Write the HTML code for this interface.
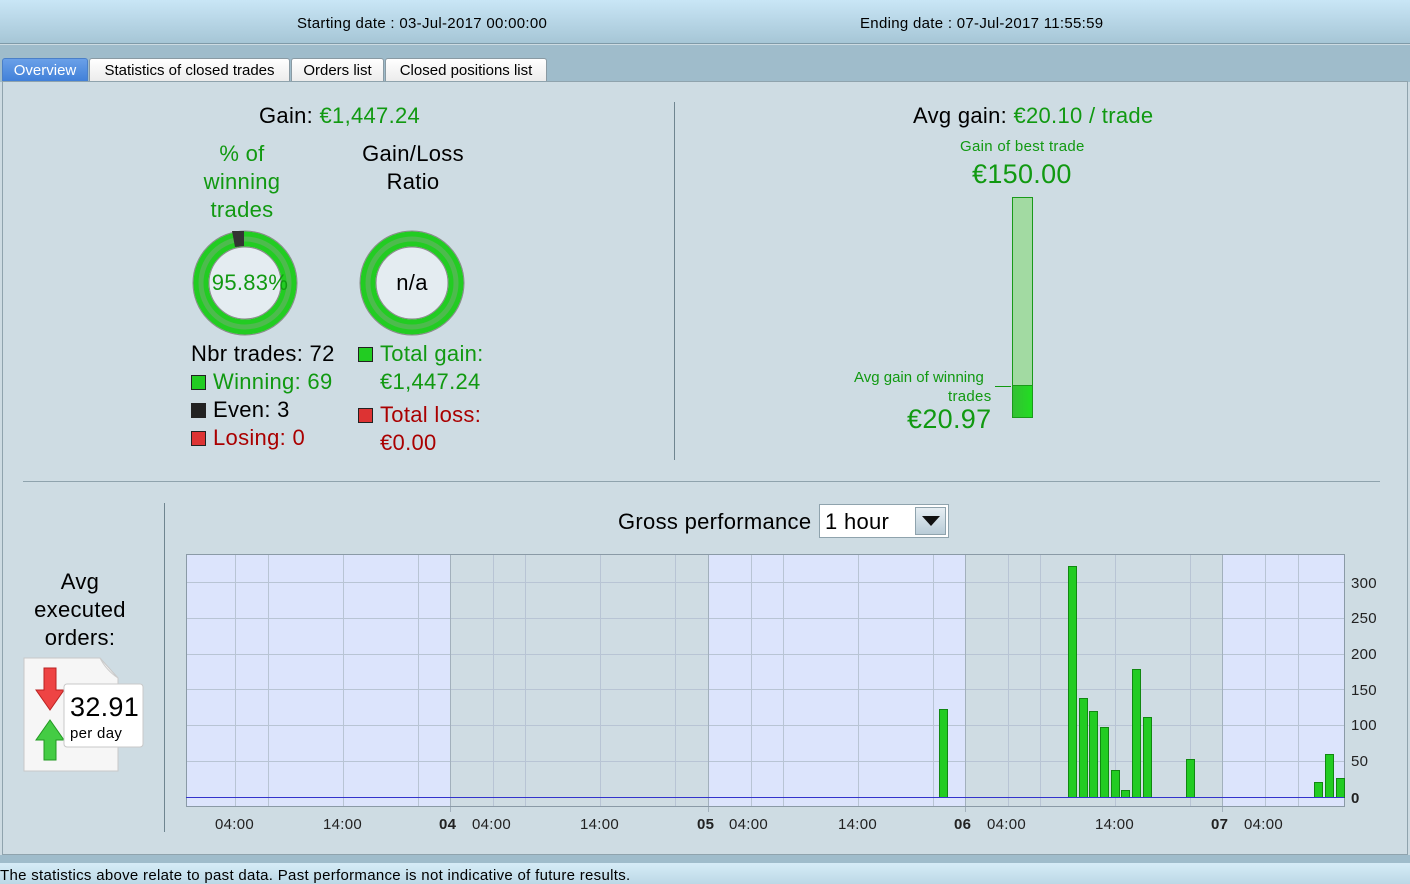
<!DOCTYPE html>
<html><head><meta charset="utf-8"><style>
*{margin:0;padding:0;box-sizing:border-box}
body{width:1410px;height:884px;overflow:hidden;background:#cddbe2;font-family:"Liberation Sans",Arial,sans-serif;position:relative;color:#000;letter-spacing:0.3px}
.a{position:absolute;white-space:nowrap}
.g{color:#119911}.r{color:#aa0000}
.sq{display:inline-block;width:15px;height:15px;border:1px solid #222;vertical-align:-1px;margin-right:7px}
.tab{position:absolute;top:58px;height:24px;background:linear-gradient(#fff,#ebebeb);border:1px solid #8a9aa3;border-bottom:none;border-radius:3px 3px 0 0;font-size:15px;line-height:23px;text-align:center;letter-spacing:0}
</style></head><body>
<div class="a" style="left:0;top:0;width:1410px;height:44px;background:linear-gradient(#c9e6f6,#a6c6d6);border-bottom:1px solid #7f9aa8"></div>
<div class="a" style="left:297px;top:15px;font-size:15px">Starting date : 03-Jul-2017 00:00:00</div>
<div class="a" style="left:860px;top:15px;font-size:15px">Ending date : 07-Jul-2017 11:55:59</div>
<div class="a" style="left:0;top:45px;width:1410px;height:37px;background:#9fbccb"></div>
<div class="tab" style="left:2px;width:86px;background:linear-gradient(#6aa0e8,#3f7fd8);color:#fff;border-color:#4a7fc8">Overview</div>
<div class="tab" style="left:89px;width:201px">Statistics of closed trades</div>
<div class="tab" style="left:291px;width:93px">Orders list</div>
<div class="tab" style="left:385px;width:162px">Closed positions list</div>
<div class="a" style="left:2px;top:81px;width:1406px;height:774px;background:#cedce3;border:1px solid #8fa3ad"></div>
<div class="a" style="left:0;top:855px;width:1410px;height:8px;background:#9fbccb"></div>
<div class="a" style="left:0;top:863px;width:1410px;height:21px;background:linear-gradient(#d6ecf7,#bcd8e6)"></div>
<div class="a" style="left:0;top:867px;font-size:15px">The statistics above relate to past data. Past performance is not indicative of future results.</div>

<div class="a" style="left:259px;top:103px;font-size:22px">Gain: <span class="g">€1,447.24</span></div>
<div class="a g" style="left:194px;top:140px;width:96px;text-align:center;font-size:22px;line-height:28px;white-space:normal">% of winning trades</div>
<div class="a" style="left:348px;top:140px;width:130px;text-align:center;font-size:22px;line-height:28px;white-space:normal">Gain/Loss Ratio</div>
<svg class="a" style="left:190px;top:228px" width="110" height="110"><circle cx="55" cy="55" r="52" fill="none" stroke="#888" stroke-width="1"/><circle cx="55" cy="55" r="44" fill="none" stroke="#22cc22" stroke-width="15"/><circle cx="55" cy="55" r="44" fill="none" stroke="#4dbb4d" stroke-width="5"/><path d="M42 3 L54 3 L54 18 L45 19Z" fill="#333"/><circle cx="55" cy="55" r="36" fill="#e4ecf1" stroke="#888"/><text x="60" y="62" text-anchor="middle" font-size="22" fill="#119911" font-family="Liberation Sans">95.83%</text></svg>
<svg class="a" style="left:357px;top:228px" width="110" height="110"><circle cx="55" cy="55" r="52" fill="none" stroke="#888" stroke-width="1"/><circle cx="55" cy="55" r="44" fill="none" stroke="#22cc22" stroke-width="15"/><circle cx="55" cy="55" r="44" fill="none" stroke="#4dbb4d" stroke-width="5"/><circle cx="55" cy="55" r="36" fill="#e4ecf1" stroke="#888"/><text x="55" y="62" text-anchor="middle" font-size="22" fill="#000" font-family="Liberation Sans">n/a</text></svg>
<div class="a" style="left:191px;top:341px;font-size:22px">Nbr trades: 72</div>
<div class="a g" style="left:191px;top:369px;font-size:22px"><span class="sq" style="background:#2c2"></span>Winning: 69</div>
<div class="a" style="left:191px;top:397px;font-size:22px"><span class="sq" style="background:#222"></span>Even: 3</div>
<div class="a r" style="left:191px;top:425px;font-size:22px"><span class="sq" style="background:#d33"></span>Losing: 0</div>
<div class="a g" style="left:358px;top:341px;font-size:22px"><span class="sq" style="background:#2c2"></span>Total gain:</div>
<div class="a g" style="left:380px;top:369px;font-size:22px">€1,447.24</div>
<div class="a r" style="left:358px;top:402px;font-size:22px"><span class="sq" style="background:#d33"></span>Total loss:</div>
<div class="a r" style="left:380px;top:430px;font-size:22px">€0.00</div>
<div class="a" style="left:674px;top:102px;width:1px;height:358px;background:#6f8590"></div>

<div class="a" style="left:913px;top:103px;font-size:22px">Avg gain: <span class="g">€20.10 / trade</span></div>
<div class="a g" style="left:960px;top:138px;font-size:15px">Gain of best trade</div>
<div class="a g" style="left:972px;top:159px;font-size:27px">€150.00</div>
<div class="a" style="left:1012px;top:197px;width:21px;height:221px;background:#a2daa2;border:1px solid #1a9a1a"></div>
<div class="a" style="left:1012px;top:385px;width:21px;height:33px;background:linear-gradient(90deg,#33c033,#22dd22);border:1px solid #1a9a1a"></div>
<div class="a" style="left:995px;top:386px;width:16px;height:1px;background:#119911"></div>
<div class="a g" style="left:854px;top:369px;font-size:15px;letter-spacing:0">Avg gain of winning</div>
<div class="a g" style="left:948px;top:388px;font-size:15px">trades</div>
<div class="a g" style="left:907px;top:404px;font-size:27px">€20.97</div>

<div class="a" style="left:23px;top:481px;width:1357px;height:1px;background:#8fa3ad"></div>
<div class="a" style="left:164px;top:503px;width:1px;height:329px;background:#6f8590"></div>
<div class="a" style="left:20px;top:568px;width:120px;text-align:center;font-size:22px;line-height:28px;white-space:normal">Avg executed orders:</div>
<svg class="a" style="left:22px;top:656px" width="125" height="120"><path d="M2 2 H78 L96 22 V115 H2Z" fill="#f6f6f6" stroke="#c8c8c8"/><path d="M78 2 Q84 14 96 22" fill="none" stroke="#ccc"/><path d="M22 12 H34 V34 H42 L28 54 L14 34 H22Z" fill="#e44" stroke="#b22"/><path d="M22 104 V84 H14 L28 64 L42 84 H34 V104Z" fill="#4c4" stroke="#292"/><rect x="42" y="28" width="79" height="63" rx="3" fill="#fff" stroke="#c8c8c8"/><text x="48" y="60" font-size="27" font-family="Liberation Sans">32.91</text><text x="48" y="82" font-size="15" font-family="Liberation Sans">per day</text></svg>

<div class="a" style="left:618px;top:509px;font-size:22px">Gross performance</div>
<div class="a" style="left:819px;top:504px;width:130px;height:34px;background:#fff;border:1px solid #8fa3ad;font-size:22px;padding:4px 0 0 5px">1 hour</div>
<div class="a" style="left:915px;top:507px;width:31px;height:28px;background:linear-gradient(#e6eef3,#b9ccd7);border:1px solid #8fa3ad"></div>
<svg class="a" style="left:921px;top:515px" width="20" height="12"><path d="M1 1 H19 L10 11Z" fill="#111"/></svg>

<svg class="a" style="left:0;top:0" width="1410" height="884" font-family="Liberation Sans" font-size="15">
<rect x="186" y="554" width="1158" height="252" fill="#dce4fc"/>
<rect x="450" y="554" width="258" height="252" fill="#cfdce3"/>
<rect x="965" y="554" width="257" height="252" fill="#cfdce3"/>
<g stroke="#b8c4d4" stroke-width="1">
<line x1="186" x2="1344" y1="761.5" y2="761.5"/><line x1="186" x2="1344" y1="725.5" y2="725.5"/><line x1="186" x2="1344" y1="689.5" y2="689.5"/><line x1="186" x2="1344" y1="654.5" y2="654.5"/><line x1="186" x2="1344" y1="618.5" y2="618.5"/><line x1="186" x2="1344" y1="582.5" y2="582.5"/>
<line x1="235.5" x2="235.5" y1="554" y2="806"/><line x1="268.5" x2="268.5" y1="554" y2="806"/><line x1="343.5" x2="343.5" y1="554" y2="806"/><line x1="418.5" x2="418.5" y1="554" y2="806"/>
<line x1="493.5" x2="493.5" y1="554" y2="806"/><line x1="525.5" x2="525.5" y1="554" y2="806"/><line x1="600.5" x2="600.5" y1="554" y2="806"/><line x1="675.5" x2="675.5" y1="554" y2="806"/>
<line x1="751.5" x2="751.5" y1="554" y2="806"/><line x1="783.5" x2="783.5" y1="554" y2="806"/><line x1="858.5" x2="858.5" y1="554" y2="806"/><line x1="933.5" x2="933.5" y1="554" y2="806"/>
<line x1="1008.5" x2="1008.5" y1="554" y2="806"/><line x1="1040.5" x2="1040.5" y1="554" y2="806"/><line x1="1115.5" x2="1115.5" y1="554" y2="806"/><line x1="1190.5" x2="1190.5" y1="554" y2="806"/>
<line x1="1265.5" x2="1265.5" y1="554" y2="806"/><line x1="1298.5" x2="1298.5" y1="554" y2="806"/>
</g>
<g stroke="#a2b0bc"><line x1="450.5" x2="450.5" y1="554" y2="812"/><line x1="708.5" x2="708.5" y1="554" y2="812"/><line x1="965.5" x2="965.5" y1="554" y2="812"/><line x1="1222.5" x2="1222.5" y1="554" y2="812"/></g>
<rect x="186.5" y="554.5" width="1158" height="252" fill="none" stroke="#8a9aa6"/>
<g fill="#22cc22" stroke="#118811">
<rect x="939.5" y="709.5" width="8" height="88"/><rect x="1068.5" y="566.5" width="8" height="231"/><rect x="1079.5" y="698.5" width="8" height="99"/><rect x="1089.5" y="711.5" width="8" height="86"/><rect x="1100.5" y="727.5" width="8" height="70"/><rect x="1111.5" y="770.5" width="8" height="27"/><rect x="1121.5" y="790.5" width="8" height="7"/><rect x="1132.5" y="669.5" width="8" height="128"/><rect x="1143.5" y="717.5" width="8" height="80"/><rect x="1186.5" y="759.5" width="8" height="38"/><rect x="1314.5" y="782.5" width="8" height="15"/><rect x="1325.5" y="754.5" width="8" height="43"/><rect x="1336.5" y="778.5" width="8" height="19"/>
</g>
<line x1="186" x2="1344" y1="797.5" y2="797.5" stroke="#3333cc"/>
<g fill="#222"><text x="1351" y="588">300</text><text x="1351" y="623">250</text><text x="1351" y="659">200</text><text x="1351" y="695">150</text><text x="1351" y="730">100</text><text x="1351" y="766">50</text><text x="1351" y="803" font-weight="bold">0</text>
<text x="215" y="829">04:00</text><text x="323" y="829">14:00</text><text x="439" y="829" font-weight="bold">04</text><text x="472" y="829">04:00</text><text x="580" y="829">14:00</text><text x="697" y="829" font-weight="bold">05</text><text x="729" y="829">04:00</text><text x="838" y="829">14:00</text><text x="954" y="829" font-weight="bold">06</text><text x="987" y="829">04:00</text><text x="1095" y="829">14:00</text><text x="1211" y="829" font-weight="bold">07</text><text x="1244" y="829">04:00</text></g>
</svg>
</body></html>
